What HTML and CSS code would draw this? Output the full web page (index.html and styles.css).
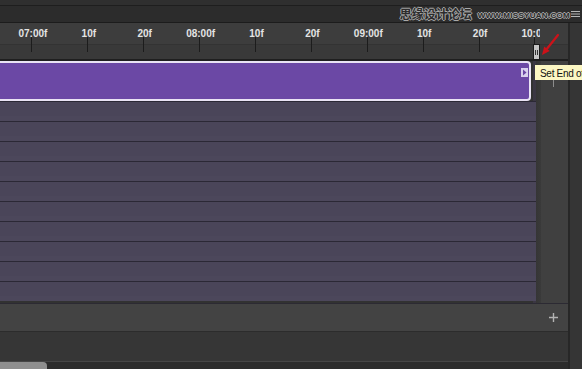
FILE: index.html
```html
<!DOCTYPE html>
<html lang="en">
<head>
<title>Timeline</title>
<link rel="stylesheet" href="styles.css">
</head>
<body>
<div class="app">
  <!-- top bar with the forum watermark -->
  <div class="topbar">
    <span class="logo">思缘设计论坛</span>
    <span class="url">WWW.MISSYUAN.COM</span>
    <svg class="menu" width="9" height="8" viewBox="0 0 9 8">
      <path d="M0 1.5h9M0 4h9M0 6.5h9" stroke="#b5b5b5" stroke-width="1"/>
    </svg>
  </div>

  <div class="frame">
    <div class="main">
      <div class="ruler">
        <div class="scale">
          <div class="mark"><span>07:00f</span></div>
          <div class="mark"><span>10f</span></div>
          <div class="mark"><span>20f</span></div>
          <div class="mark"><span>08:00f</span></div>
          <div class="mark"><span>10f</span></div>
          <div class="mark"><span>20f</span></div>
          <div class="mark"><span>09:00f</span></div>
          <div class="mark"><span>10f</span></div>
          <div class="mark"><span>20f</span></div>
          <div class="mark"><span>10:00f</span></div>
        </div>
      </div>

      <div class="tracks">
        <div class="lanes">
          <div class="clip">
            <span class="clip-btn">
              <svg width="7" height="9" viewBox="0 0 7 9">
                <rect width="7" height="9" fill="#d9d1ee"/>
                <path d="M2 1.5L5.5 4.5L2 7.5Z" fill="#6b48a5"/>
              </svg>
            </span>
          </div>
          <div class="row"></div>
          <div class="row"></div>
          <div class="row"></div>
          <div class="row"></div>
          <div class="row"></div>
          <div class="row"></div>
          <div class="row"></div>
          <div class="row"></div>
          <div class="row"></div>
          <div class="row"></div>
        </div>
        <div class="divider"></div>
        <div class="side"><span class="side-tick"></span></div>
      </div>

      <div class="footer">
        <svg width="9" height="9" viewBox="0 0 9 9">
          <path d="M4.5 0v9M0 4.5h9" stroke="#b3b3b3" stroke-width="1.4"/>
        </svg>
      </div>
      <div class="spacer"></div>
      <div class="scrollbar"><div class="thumb"></div></div>
    </div>
    <div class="strip"></div>
  </div>

  <!-- overlays: end of work area handle, pointer arrow, tooltip -->
  <div class="end-handle"><span></span><span></span></div>
  <svg class="arrow" width="26" height="30" viewBox="0 0 26 30">
    <path d="M21 5L10 18.8" stroke="#cc1219" stroke-width="2.2" stroke-linecap="round"/>
    <path d="M5 25L12.7 20.9L7.2 16.6Z" fill="#cc1219"/>
  </svg>
  <div class="tooltip">Set End of Work Area</div>
</div>
</body>
</html>
```

FILE: styles.css
```css
body {
  margin: 0;
  background: #343434;
  font-family: "Liberation Sans", Arial, sans-serif;
}

.app {
  position: relative;
  width: 582px;
  height: 369px;
  overflow: hidden;
}

/* top bar */
.topbar {
  height: 23px;
  box-sizing: border-box;
  display: flex;
  align-items: center;
  justify-content: flex-end;
  padding: 6px 2px 0 0;
  background: linear-gradient(#2f2f2f 0 5px, #1e1e1e 5px 6px, #2c2c2c 6px);
  border-bottom: 1px solid #1c1c1c;
}
.logo {
  font-family: "Noto Sans CJK SC", sans-serif;
  font-size: 12px;
  font-weight: bold;
  line-height: 14px;
  color: #2c2c2c;
  text-shadow: 1px 0 #a9a9a9, -1px 0 #a9a9a9, 0 1px #a9a9a9, 0 -1px #a9a9a9;
  margin-right: 6px;
}
.url {
  font-size: 8px;
  font-weight: bold;
  line-height: 8px;
  letter-spacing: 0.3px;
  color: #2c2c2c;
  text-shadow: 1px 0 #a9a9a9, -1px 0 #a9a9a9, 0 1px #a9a9a9, 0 -1px #a9a9a9;
  margin-top: 3px;
}
.menu {margin: 0 0 1px 1px;}

.frame {
  display: grid;
  grid-template-columns: 568px 14px;
  height: 346px;
}

.strip {
  background: #353535;
  border-left: 2px solid #272727;
}

/* time ruler */
.ruler {
  height: 38px;
  box-sizing: border-box;
  border-bottom: 2px solid #1f1f1f;
  background: linear-gradient(#3d3d3d 0 21px, #333 21px 22px, #393939 22px);
}
.scale {
  width: 540px;
  height: 100%;
  overflow: hidden;
  display: flex;
  padding-left: 4px;
  box-sizing: border-box;
}
.mark {
  flex: 0 0 55.9px;
  display: flex;
  flex-direction: column;
  align-items: center;
  padding-top: 6px;
}
.mark span {
  font-size: 10px;
  font-weight: bold;
  line-height: 10px;
  color: #e4e4e4;
  white-space: nowrap;
  padding-left: 2px;
}
.mark::after {
  content: "";
  width: 1px;
  height: 15px;
  margin-top: -2px;
  background: #1c1c1c;
}

/* tracks */
.tracks {
  display: grid;
  grid-template-columns: 536px 5px 27px;
  height: 242px;
}
.lanes {
  background: #323232;
  box-shadow: inset -3px 0 #3b3743;
}
.clip {
  width: 531px;
  height: 40px;
  box-sizing: border-box;
  background: #6b48a5;
  border: 2px solid #e9e3f4;
  border-left: none;
  border-radius: 0 4px 4px 0;
  display: flex;
  justify-content: flex-end;
  align-items: flex-start;
  padding: 5px 1px 0 0;
}
.clip-btn {display: flex;}
.row {
  height: 20px;
  box-sizing: border-box;
  border-top: 1px solid #2b2835;
  background: linear-gradient(#4a4559 0 14px, #4c475b 14px);
}
.lanes .row:first-of-type {margin-top: 2px;}
.divider {
  background: linear-gradient(90deg, #353535, #3a3a3a);
}
.side {
  background: #404040;
  padding: 19px 0 0 12px;
}
.side-tick {
  display: block;
  width: 1px;
  height: 7px;
  background: #8c8c8c;
}

/* bottom */
.footer {
  height: 29px;
  box-sizing: border-box;
  background: #434343;
  border-top: 1px solid #2c2a33;
  border-bottom: 1px solid #2c2c2c;
  display: flex;
  align-items: center;
  justify-content: flex-end;
  padding: 0 10px 1px 0;
}
.spacer {
  height: 29px;
  background: #363636;
}
.scrollbar {
  height: 8px;
  box-sizing: border-box;
  background: #2c2c2c;
  border-top: 1px solid #464646;
}
.thumb {
  width: 47px;
  height: 100%;
  background: #8f8f8f;
  border-radius: 0 4px 0 0;
}

/* overlays */
.end-handle {
  position: absolute;
  left: 533px;
  top: 44px;
  width: 7px;
  height: 16px;
  box-sizing: border-box;
  background: #c4c4c4;
  border: 1px solid #1b1b1b;
  display: flex;
  justify-content: center;
  align-items: center;
  gap: 1px;
}
.end-handle span {
  width: 1px;
  height: 5px;
  background: #333;
}
.arrow {
  position: absolute;
  left: 537px;
  top: 30px;
}
.tooltip {
  position: absolute;
  left: 535px;
  top: 65px;
  width: 70px;
  height: 15px;
  box-sizing: border-box;
  background: #fcf7c3;
  color: #111;
  font-size: 10px;
  line-height: 12px;
  letter-spacing: -0.3px;
  padding: 3px 0 0 5px;
  white-space: nowrap;
}
```
